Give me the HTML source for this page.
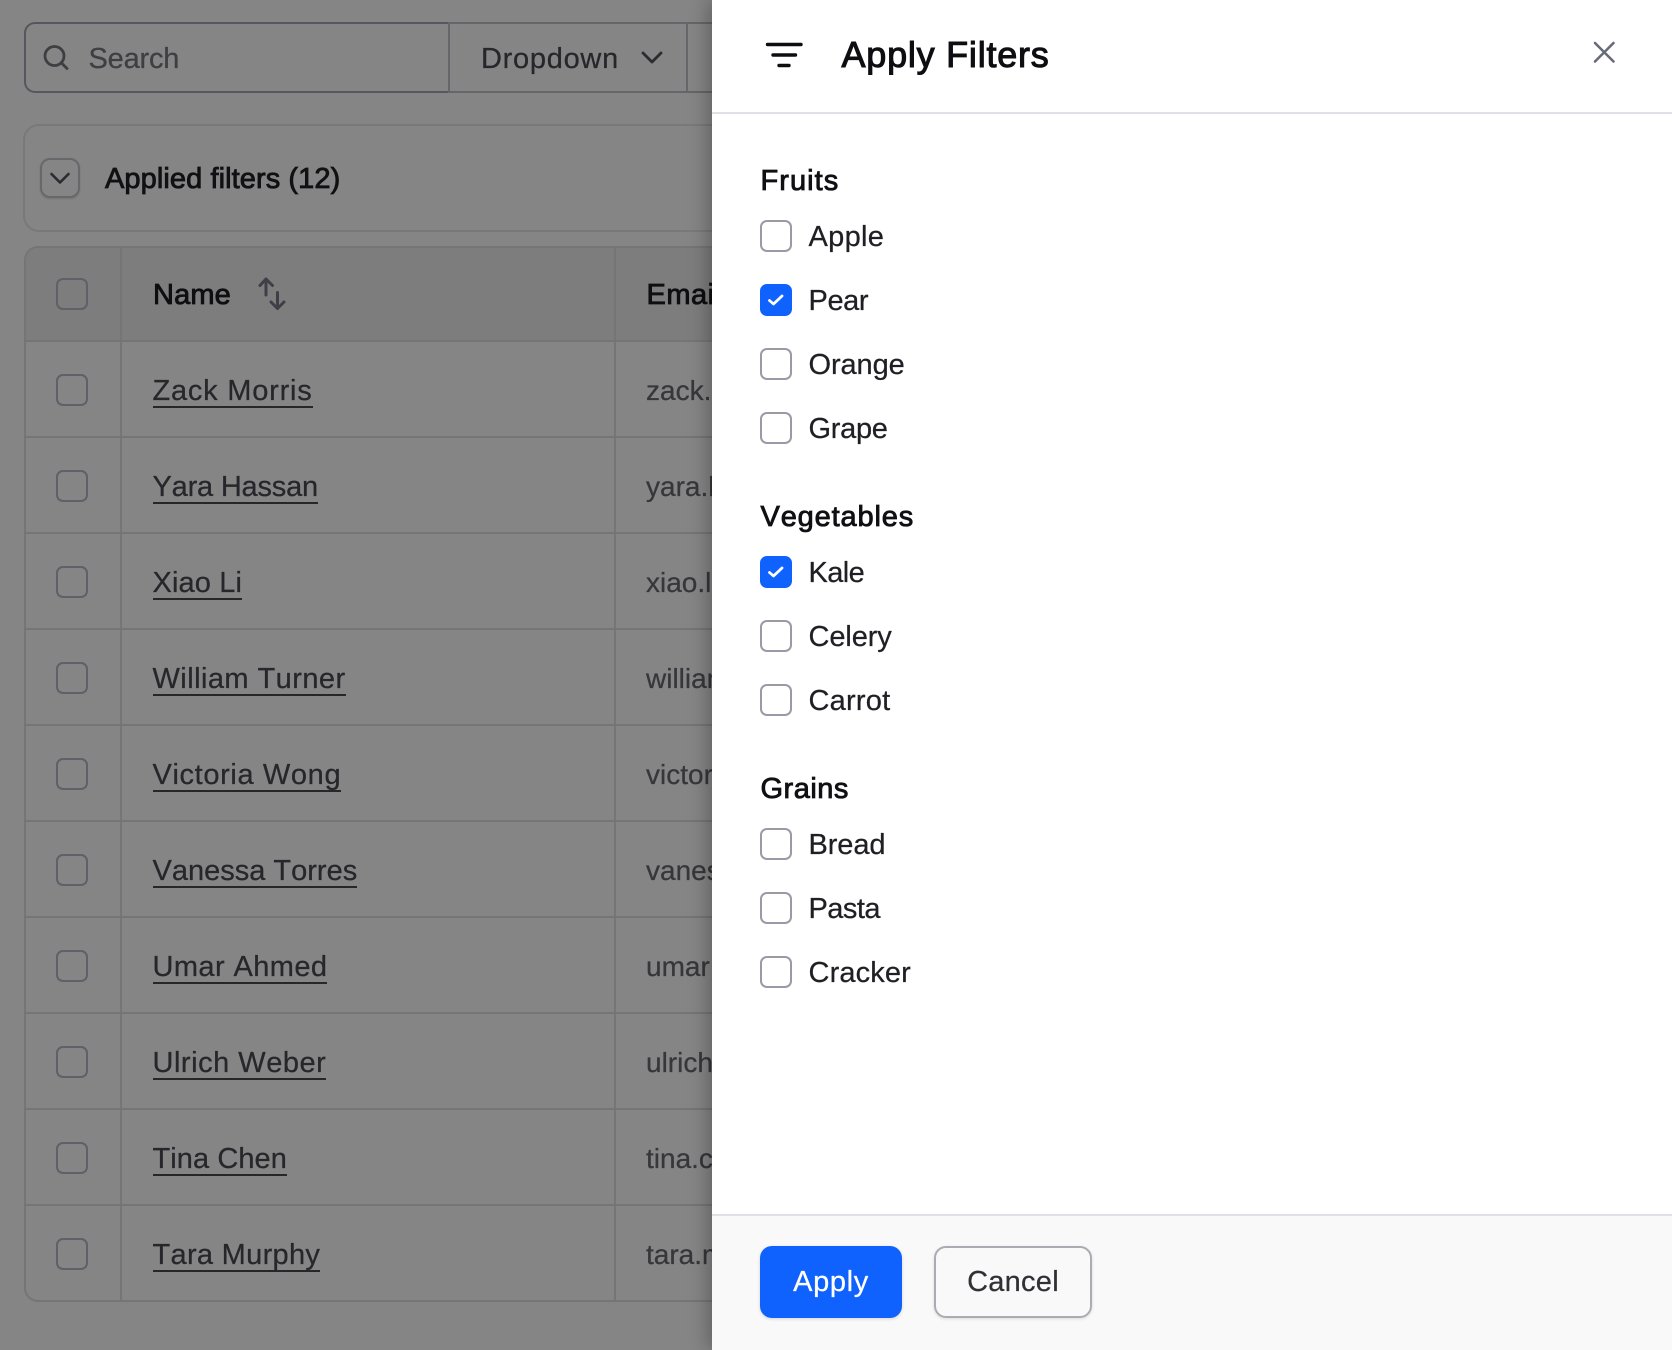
<!DOCTYPE html>
<html><head><meta charset="utf-8"><title>Apply Filters</title>
<style>
html,body{margin:0;padding:0;background:#858585}
#root{position:relative;width:1672px;height:1350px;overflow:hidden;background:#858585;font-family:"Liberation Sans",sans-serif;font-size:29px;font-kerning:none;-webkit-text-stroke:.25px currentColor}
#root div,#root a,#root svg{position:absolute;display:block}
.t{line-height:40px;height:40px;white-space:nowrap}
#root .s{-webkit-text-stroke:.85px currentColor}
.cb{width:32px;height:32px;box-sizing:border-box;border:2px solid #5f6068;border-radius:7px;left:56px}
.ln{background:#757575}
a.n{left:152.500px;height:37px;line-height:40px;box-sizing:border-box;border-bottom:2px solid #26262b;color:#26262b;white-space:nowrap;text-decoration:none}
.e{left:646px;color:#36363b;font-size:28px}
.h{left:760.500px;color:#101014}
.l{left:808.500px;color:#1f1f24}
.pc{left:760px;width:32px;height:32px;box-sizing:border-box;border:2px solid #9a9aa6;border-radius:7px;background:#fff}
.pc.on{background:#0f62fe;border-color:#0f62fe}
.pc svg{left:4px;top:4px}
</style></head><body><div id="root">

<!-- toolbar -->
<div style="left:24px;top:22px;width:424px;height:71px;box-sizing:border-box;border:2px solid #56565c;border-right:none;border-radius:11px 0 0 11px"></div>
<div style="left:448px;top:22px;width:264px;height:71px;box-sizing:border-box;border-top:2px solid #66666a;border-bottom:2px solid #66666a"></div>
<div style="left:448px;top:22px;width:2px;height:71px;background:#66666a"></div>
<div style="left:686px;top:22px;width:2px;height:71px;background:#66666a"></div>
<svg style="left:40px;top:41px" width="32" height="32" viewBox="0 0 32 32" fill="none" stroke="#3e3e43" stroke-width="2.800" stroke-linecap="round"><circle cx="14.500" cy="15" r="9.500"/><path d="M21.500 22L27 27.500"/></svg>
<div class="t" style="left:88.500px;top:39px;color:#3e3e43;letter-spacing:-.2px">Search</div>
<div class="t" style="left:481px;top:39px;color:#26262b;letter-spacing:.72px">Dropdown</div>
<svg style="left:639px;top:46px" width="26" height="24" viewBox="0 0 26 24" fill="none" stroke="#2b2b30" stroke-width="2.800" stroke-linecap="round" stroke-linejoin="round"><path d="M4 7l9 9 9-9"/></svg>

<!-- applied filters -->
<div style="left:23px;top:124px;width:720px;height:108px;box-sizing:border-box;border:2px solid #79797b;border-radius:16px"></div>
<div style="left:40px;top:158px;width:40px;height:40px;box-sizing:border-box;border:2px solid #68686c;border-radius:10px;box-shadow:0 1px 2px rgba(0,0,0,.12)"></div>
<svg style="left:46px;top:166px" width="28" height="24" viewBox="0 0 28 24" fill="none" stroke="#2b2b30" stroke-width="2.600" stroke-linecap="round" stroke-linejoin="round"><path d="M5.500 8l8.500 8.500 8.500-8.500"/></svg>
<div class="t s" style="left:105px;top:159px;color:#111114;letter-spacing:.08px">Applied filters (12)</div>

<!-- table -->
<div style="left:24px;top:246px;width:720px;height:1056px;box-sizing:border-box;border:2px solid #757577;border-radius:14px"></div>
<div style="left:26px;top:248px;width:700px;height:93px;background:#7d7d7d;border-radius:12px 0 0 0"></div>
<div class="ln" style="left:120px;top:248px;width:2px;height:1052px"></div>
<div class="ln" style="left:614px;top:248px;width:2px;height:1052px"></div>
<div class="ln" style="left:26px;top:340px;width:700px;height:2px"></div>
<div class="ln" style="left:26px;top:436px;width:700px;height:2px"></div>
<div class="ln" style="left:26px;top:532px;width:700px;height:2px"></div>
<div class="ln" style="left:26px;top:628px;width:700px;height:2px"></div>
<div class="ln" style="left:26px;top:724px;width:700px;height:2px"></div>
<div class="ln" style="left:26px;top:820px;width:700px;height:2px"></div>
<div class="ln" style="left:26px;top:916px;width:700px;height:2px"></div>
<div class="ln" style="left:26px;top:1012px;width:700px;height:2px"></div>
<div class="ln" style="left:26px;top:1108px;width:700px;height:2px"></div>
<div class="ln" style="left:26px;top:1204px;width:700px;height:2px"></div>

<div class="cb" style="top:278px"></div>
<div class="t s" style="left:153px;top:275px;color:#0f0f12;letter-spacing:.15px">Name</div>
<svg style="left:256px;top:276px" width="32" height="36" viewBox="0 0 32 36" fill="none" stroke="#3e3f47" stroke-width="3" stroke-linecap="round" stroke-linejoin="round"><path d="M10 19V3.500M4 9.500l6-6.500 6.500 6.500"/><path d="M21.500 16.500V32.500M15 26l6.500 6.500 6.500-6.500"/></svg>
<div class="t s" style="left:646.500px;top:275px;color:#0f0f12;letter-spacing:.5px">Email</div>

<div class="cb" style="top:374px"></div><a class="n" style="top:371px;letter-spacing:.78px">Zack Morris</a><div class="t e" style="top:371px">zack.morris@example.com</div>
<div class="cb" style="top:470px"></div><a class="n" style="top:467px;letter-spacing:-.2px">Yara Hassan</a><div class="t e" style="top:467px">yara.hassan@example.com</div>
<div class="cb" style="top:566px"></div><a class="n" style="top:563px;letter-spacing:.13px">Xiao Li</a><div class="t e" style="top:563px">xiao.li@example.com</div>
<div class="cb" style="top:662px"></div><a class="n" style="top:659px;letter-spacing:.44px">William Turner</a><div class="t e" style="top:659px">william.turner@example.com</div>
<div class="cb" style="top:758px"></div><a class="n" style="top:755px;letter-spacing:.63px">Victoria Wong</a><div class="t e" style="top:755px">victoria.wong@example.com</div>
<div class="cb" style="top:854px"></div><a class="n" style="top:851px">Vanessa Torres</a><div class="t e" style="top:851px">vanessa.torres@example.com</div>
<div class="cb" style="top:950px"></div><a class="n" style="top:947px;letter-spacing:.41px">Umar Ahmed</a><div class="t e" style="top:947px">umar.ahmed@example.com</div>
<div class="cb" style="top:1046px"></div><a class="n" style="top:1043px;letter-spacing:.52px">Ulrich Weber</a><div class="t e" style="top:1043px">ulrich.weber@example.com</div>
<div class="cb" style="top:1142px"></div><a class="n" style="top:1139px;letter-spacing:.07px">Tina Chen</a><div class="t e" style="top:1139px">tina.chen@example.com</div>
<div class="cb" style="top:1238px"></div><a class="n" style="top:1235px;letter-spacing:.3px">Tara Murphy</a><div class="t e" style="top:1235px">tara.murphy@example.com</div>

<!-- panel -->
<div style="left:712px;top:0;width:960px;height:1350px;background:#fff;box-shadow:-4px 0 18px rgba(0,0,0,.28)"></div>
<svg style="left:762px;top:40px" width="44" height="30" viewBox="0 0 44 30" fill="none" stroke="#0e0e12" stroke-width="3.400" stroke-linecap="round"><path d="M5.500 4.500H39M11 15H33.500M17 25.500H27"/></svg>
<div class="t s" style="left:841.500px;top:30px;height:50px;line-height:50px;font-size:36px;-webkit-text-stroke:1.050px currentColor;color:#0e0e12;letter-spacing:.77px">Apply Filters</div>
<svg style="left:1590px;top:38px" width="28" height="28" viewBox="0 0 28 28" fill="none" stroke="#676a78" stroke-width="2.600" stroke-linecap="round"><path d="M5 5L23.500 23.500M23.500 5L5 23.500"/></svg>
<div style="left:712px;top:112px;width:960px;height:2px;background:#e0e0e6"></div>

<div class="t h s" style="top:161px;letter-spacing:1.06px">Fruits</div>
<div class="pc" style="top:220px"></div><div class="t l" style="top:217px;letter-spacing:.3px">Apple</div>
<div class="pc on" style="top:284px"><svg width="20" height="20" viewBox="0 0 20 20" fill="none" stroke="#fff" stroke-width="2.800" stroke-linecap="round" stroke-linejoin="round"><path d="M3.500 10.500l4 3.500 8.500-8"/></svg></div><div class="t l" style="top:281px;letter-spacing:-.4px">Pear</div>
<div class="pc" style="top:348px"></div><div class="t l" style="top:345px;letter-spacing:-.1px">Orange</div>
<div class="pc" style="top:412px"></div><div class="t l" style="top:409px;letter-spacing:-.3px">Grape</div>

<div class="t h s" style="top:497px;letter-spacing:.85px">Vegetables</div>
<div class="pc on" style="top:556px"><svg width="20" height="20" viewBox="0 0 20 20" fill="none" stroke="#fff" stroke-width="2.800" stroke-linecap="round" stroke-linejoin="round"><path d="M3.500 10.500l4 3.500 8.500-8"/></svg></div><div class="t l" style="top:553px;letter-spacing:-.6px">Kale</div>
<div class="pc" style="top:620px"></div><div class="t l" style="top:617px;letter-spacing:-.1px">Celery</div>
<div class="pc" style="top:684px"></div><div class="t l" style="top:681px;letter-spacing:.23px">Carrot</div>

<div class="t h s" style="top:769px;letter-spacing:.5px">Grains</div>
<div class="pc" style="top:828px"></div><div class="t l" style="top:825px;letter-spacing:-.1px">Bread</div>
<div class="pc" style="top:892px"></div><div class="t l" style="top:889px;letter-spacing:-.55px">Pasta</div>
<div class="pc" style="top:956px"></div><div class="t l" style="top:953px;letter-spacing:.13px">Cracker</div>

<!-- footer -->
<div style="left:712px;top:1214px;width:960px;height:136px;box-sizing:border-box;border-top:2px solid #e0e0e6;background:#f9f9fa"></div>
<div style="left:760px;top:1246px;width:142px;height:72px;background:#0f62fe;border-radius:12px;box-shadow:0 1px 3px rgba(0,0,0,.15)"></div>
<div class="t" style="left:760px;top:1262px;width:142px;text-align:center;color:#fff;letter-spacing:.63px">Apply</div>
<div style="left:934px;top:1246px;width:158px;height:72px;box-sizing:border-box;border:2px solid #ababb1;border-radius:12px;box-shadow:0 1px 3px rgba(0,0,0,.12)"></div>
<div class="t" style="left:934px;top:1262px;width:158px;text-align:center;color:#303035;letter-spacing:.25px">Cancel</div>

</div></body></html>
